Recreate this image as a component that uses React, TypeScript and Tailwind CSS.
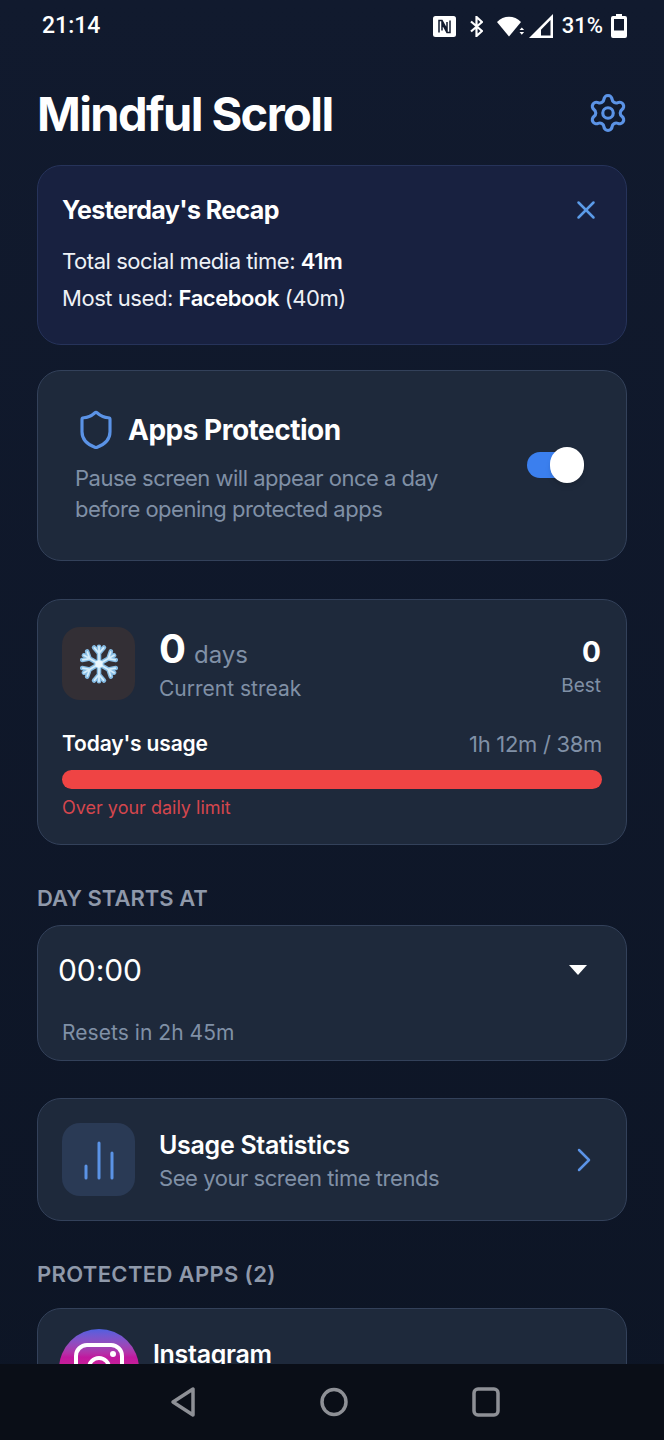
import { ChevronRight, Settings, Shield, X } from 'lucide-react'

function StatusIcons() {
  return (
    <div className="flex items-center text-white">
      <svg width="23" height="21" viewBox="0 0 23 21" className="mr-[14px]">
        <rect x="0" y="0" width="23" height="21" rx="2.500" fill="#fff" />
        <path d="M6 16.500V4.500h3l5 9V6M17 4.500v12h-3l-5-9v7" fill="none" stroke="#111a2e" strokeWidth="1.500" />
      </svg>
      <svg width="13" height="21" viewBox="0 0 13 21" className="mr-[14px]">
        <path d="M1 5.500 12 15 6.500 20V1L12 6 1 15.500" fill="none" stroke="#fff" strokeWidth="2.200" />
      </svg>
      <svg width="28" height="21" viewBox="0 0 28 21" className="mr-[4px]">
        <path d="M0 6C6.500 -1 17.500 -1 24 6L12 20.500Z" fill="#fff" />
        <path d="M22.500 14 24.800 11.500l2.300 2.500ZM22.500 16h4.600l-2.300 2.800Z" fill="#fff" />
      </svg>
      <svg width="24" height="24" viewBox="0 0 24 24" className="mr-[9px]">
        <path d="M24 0v24H0ZM21.500 6 12 15.700V21.500h9.500Z" fill="#fff" fillRule="evenodd" />
      </svg>
      <span className="mr-[8px] text-[22px] font-medium leading-none font-['Roboto',sans-serif]">31%</span>
      <svg width="16" height="24" viewBox="0 0 16 24">
        <path d="M5 0h6v2h3a2 2 0 0 1 2 2v18a2 2 0 0 1-2 2H2a2 2 0 0 1-2-2V4a2 2 0 0 1 2-2h3Z" fill="#fff" />
        <rect x="3" y="5" width="10" height="11.500" fill="#111a2e" />
      </svg>
    </div>
  )
}

function Snowflake() {
  const angles = [0, 60, 120, 180, 240, 300]
  return (
    <svg width="38" height="42" viewBox="-23 -25 46 50">
      {angles.map((a) => (
        <g key={a} transform={`rotate(${a})`} fill="none" strokeLinecap="round" strokeLinejoin="round">
          <path d="M0 0V-21M-6 -20 0 -13 6 -20" stroke="#86bce4" strokeWidth="5.500" />
        </g>
      ))}
      {angles.map((a) => (
        <g key={a} transform={`rotate(${a})`} fill="none" strokeLinecap="round" strokeLinejoin="round">
          <path d="M0 -3V-21M-5.500 -19.500 0 -13 5.500 -19.500" stroke="#d4ecfa" strokeWidth="2.200" />
        </g>
      ))}
      <circle r="4.500" fill="#eaf6fd" />
    </svg>
  )
}

function Card({ className, children }: { className: string; children: React.ReactNode }) {
  return <div className={`rounded-[24px] border border-[#33415a] bg-[#1e293b] ${className}`}>{children}</div>
}

function SectionLabel({ children, className }: { children: React.ReactNode; className: string }) {
  return <div className={`text-[22px] font-semibold leading-[28px] text-[#8f99aa] ${className}`}>{children}</div>
}

function BarChartLines() {
  return (
    <svg width="34" height="40" viewBox="0 0 34 40" className="text-[#5b93e6]">
      <path d="M4 26v12M17 3v35M30 13v25" stroke="currentColor" strokeWidth="3" strokeLinecap="round" />
    </svg>
  )
}

export default function App() {
  return (
    <div className="flex h-[1440px] w-[664px] flex-col overflow-hidden bg-gradient-to-b from-[#111a2e] to-[#0d1525] font-['Inter',sans-serif] text-white">
      <div className="h-[1364px] shrink-0 overflow-hidden">
        <div className="flex h-[50px] items-center justify-between pl-[42px] pr-[37px] pt-[2px]">
          <span className="text-[23px] font-medium font-['Roboto',sans-serif]">21:14</span>
          <StatusIcons />
        </div>

        <div className="px-[37px]">
          <div className="flex h-[115px] items-center justify-between pt-[11px]">
            <h1 className="text-[47px] font-bold leading-none tracking-[-1.6px]">Mindful Scroll</h1>
            <Settings className="mr-[-2px] h-[42px] w-[42px] text-[#5b93e6]" strokeWidth={1.8} />
          </div>

          <div className="h-[180px] rounded-[24px] border border-[#26335a] bg-[#182140] px-[24px] pt-[27px]">
            <div className="flex items-center justify-between pr-[1px]">
              <div className="text-[25px] font-bold leading-[34px] tracking-[-0.6px]">Yesterday's Recap</div>
              <X className="h-[30px] w-[30px] text-[#5b9be8]" strokeWidth={2} />
            </div>
            <div className="mt-[16px] text-[22px] leading-[37px] tracking-[-0.45px] text-[#eef1f6]">
              <div>
                Total social media time: <b className="font-semibold text-white">41m</b>
              </div>
              <div>
                Most used: <b className="font-semibold text-white">Facebook</b> (40m)
              </div>
            </div>
          </div>

          <Card className="mt-[25px] flex h-[191px] items-center justify-between pl-[37px] pr-[43px]">
            <div className="pt-[2px]">
              <div className="flex items-center gap-[11px]">
                <Shield className="h-[42px] w-[42px] text-[#5b93e6]" strokeWidth={1.8} />
                <div className="text-[28px] font-bold leading-[40px] tracking-[-0.5px]">Apps Protection</div>
              </div>
              <div className="mt-[12px] text-[22px] leading-[31px] tracking-[-0.5px] text-[#8090a6]">
                Pause screen will appear once a day
                <br />
                before opening protected apps
              </div>
            </div>
            <div className="relative mb-[2px] h-[26px] w-[56px] rounded-full bg-[#3b7fee]">
              <div className="absolute right-[-1px] top-[-5px] h-[36px] w-[34px] rounded-full bg-white shadow-md" />
            </div>
          </Card>

          <Card className="mt-[38px] h-[246px] px-[24px] pt-[27px]">
            <div className="flex justify-between">
              <div className="flex">
                <div className="flex h-[73px] w-[73px] items-center justify-center rounded-[18px] bg-[#332f35]">
                  <Snowflake />
                </div>
                <div className="ml-[24px]">
                  <div className="flex items-baseline leading-[44px]">
                    <span className="text-[40px] font-bold">0</span>
                    <span className="ml-[8px] text-[24px] text-[#8090a6]">days</span>
                  </div>
                  <div className="mt-[-3px] text-[21px] leading-[30px] text-[#8090a6]">Current streak</div>
                </div>
              </div>
              <div className="mr-[1px] text-right">
                <div className="text-[28px] font-bold leading-[50px]">0</div>
                <div className="mt-[-1px] text-[19px] leading-[20px] text-[#8090a6]">Best</div>
              </div>
            </div>
            <div className="mt-[25px] flex items-center justify-between">
              <div className="text-[21px] font-semibold leading-[30px] tracking-[-0.15px]">Today's usage</div>
              <div className="text-[22px] leading-[30px] tracking-[-0.3px] text-[#8090a6]">1h 12m / 38m</div>
            </div>
            <div className="mt-[11px] h-[19px] rounded-full bg-[#ef4444]" />
            <div className="mt-[7px] text-[18px] leading-[24px] text-[#d4464d]">Over your daily limit</div>
          </Card>

          <SectionLabel className="mt-[39px]">DAY STARTS AT</SectionLabel>

          <Card className="mt-[13px] h-[136px] pl-[20px] pr-[39px] pt-[24px]">
            <div className="flex items-center justify-between">
              <span className="text-[30px] leading-[40px] tracking-[-0.1px]">00:00</span>
              <svg width="18" height="10" viewBox="0 0 18 10">
                <path d="M0 0h18L9 10Z" fill="#fff" />
              </svg>
            </div>
            <div className="ml-[4px] mt-[28px] text-[21px] leading-[30px] tracking-[0.05px] text-[#8090a6]">Resets in 2h 45m</div>
          </Card>

          <Card className="mt-[37px] flex h-[123px] items-center pl-[24px] pr-[22px]">
            <div className="flex h-[73px] w-[73px] items-center justify-center rounded-[18px] bg-[#2a3a55]">
              <BarChartLines />
            </div>
            <div className="ml-[24px] flex-1 pt-[2px]">
              <div className="text-[25px] font-semibold leading-[34px] tracking-[-0.3px]">Usage Statistics</div>
              <div className="mt-[1px] text-[22px] leading-[30px] tracking-[-0.45px] text-[#8090a6]">
                See your screen time trends
              </div>
            </div>
            <ChevronRight className="h-[40px] w-[40px] text-[#5b93e6]" strokeWidth={1.5} />
          </Card>

          <SectionLabel className="mt-[39px] tracking-[0.35px]">PROTECTED APPS (2)</SectionLabel>

          <Card className="mt-[20px] flex h-[140px] items-start pl-[21px] pt-[20px]">
            <div className="flex h-[80px] w-[80px] justify-center rounded-full bg-gradient-to-b from-[#4f5fe0] via-[#c0189f] via-35% to-[#f0306a] pt-[14px]">
              <div className="relative h-[50px] w-[50px] rounded-[13px] border-[4px] border-white">
                <div className="absolute left-[9px] top-[9px] h-[24px] w-[24px] rounded-full border-[4px] border-white" />
                <div className="absolute right-[4px] top-[4px] h-[6px] w-[6px] rounded-full bg-white" />
              </div>
            </div>
            <div className="ml-[14px] mt-[8px] text-[25px] font-semibold leading-[34px] tracking-[-0.3px]">Instagram</div>
          </Card>
        </div>
      </div>

      <div className="flex flex-1 items-start justify-center bg-[#0a0e17] pl-[5px] pt-[22px] text-[#8e9096]">
        <div className="flex items-center gap-[124px]">
          <svg width="26" height="32" viewBox="0 0 26 32">
            <path d="M23 3v26L3 16Z" fill="none" stroke="currentColor" strokeWidth="3.500" strokeLinejoin="round" />
          </svg>
          <svg width="28" height="32" viewBox="0 0 28 32">
            <ellipse cx="14" cy="16" rx="12" ry="12.500" fill="none" stroke="currentColor" strokeWidth="3.500" />
          </svg>
          <svg width="28" height="32" viewBox="0 0 28 32">
            <rect x="2" y="3" width="24" height="26" rx="4" fill="none" stroke="currentColor" strokeWidth="3.500" />
          </svg>
        </div>
      </div>
    </div>
  )
}
